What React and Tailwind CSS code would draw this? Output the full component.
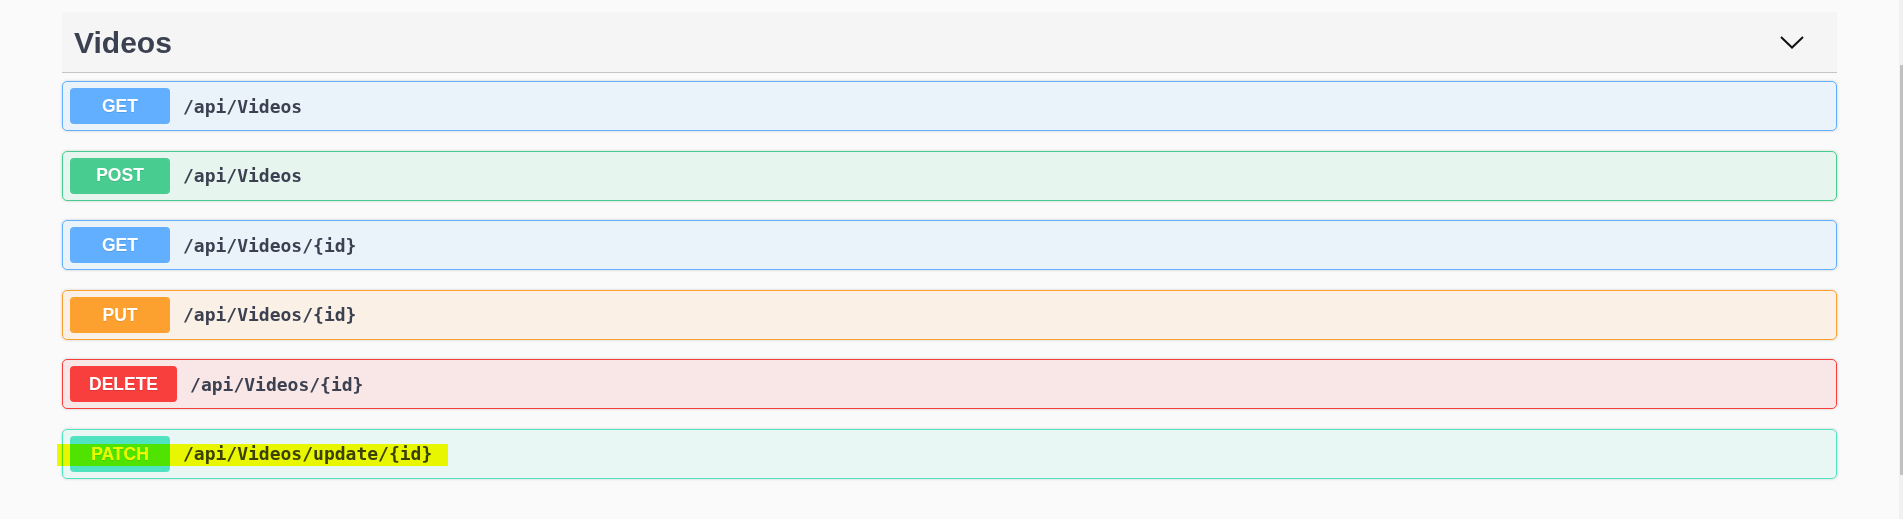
import React from 'react';

const ops = [
  { method: 'GET', path: '/api/Videos', box: 'border-[#61affe] bg-[#61affe]/10', badge: 'bg-[#61affe]' },
  { method: 'POST', path: '/api/Videos', box: 'border-[#49cc90] bg-[#49cc90]/10', badge: 'bg-[#49cc90]' },
  { method: 'GET', path: '/api/Videos/{id}', box: 'border-[#61affe] bg-[#61affe]/10', badge: 'bg-[#61affe]' },
  { method: 'PUT', path: '/api/Videos/{id}', box: 'border-[#fca130] bg-[#fca130]/10', badge: 'bg-[#fca130]' },
  { method: 'DELETE', path: '/api/Videos/{id}', box: 'border-[#f93e3e] bg-[#f93e3e]/10', badge: 'bg-[#f93e3e]' },
  { method: 'PATCH', path: '/api/Videos/update/{id}', box: 'border-[#50e3c2] bg-[#50e3c2]/10', badge: 'bg-[#50e3c2]' },
];

function OpRow({ op }) {
  return (
    <div
      className={`flex items-center h-[50px] border rounded-[5px] pl-[7px] pr-[6px] shadow-[0_0_3px_rgba(0,0,0,0.19)] ${op.box}`}
    >
      <span
        className={`min-w-[100px] h-[36px] px-[19px] flex items-center justify-center rounded-[4px] text-white font-bold text-[17.5px] [text-shadow:0_1px_0_rgba(0,0,0,0.1)] ${op.badge}`}
        style={{ fontFamily: '"Liberation Sans", Arial, sans-serif' }}
      >
        {op.method}
      </span>
      <span
        className="ml-[13px] text-[18px] font-bold text-[#3b4151]"
        style={{ fontFamily: '"DejaVu Sans Mono", monospace' }}
      >
        {op.path}
      </span>
    </div>
  );
}

export default function App() {
  return (
    <div className="flex h-[519px] bg-[#fafafa] overflow-hidden">
      <main className="relative flex-1 px-[62px] pt-[12px]">
        <section>
          <div className="flex items-center justify-between h-[61px] bg-[#f5f5f5] border-b border-[#c4c5c9] pl-[12px] pr-[33px]">
            <h3
              className="text-[30px] font-bold text-[#3b4151]"
              style={{ fontFamily: '"Liberation Sans", Arial, sans-serif' }}
            >
              Videos
            </h3>
            <svg width="24" height="14" viewBox="0 0 24 14" fill="none">
              <polyline points="1,2 12,12.5 23,2" stroke="#111" strokeWidth="2" />
            </svg>
          </div>
          <div className="flex flex-col gap-[19.6px] mt-[8px]">
            {ops.map((op, i) => (
              <OpRow key={i} op={op} />
            ))}
          </div>
        </section>
        {/* highlighter mark over the PATCH row */}
        <div className="absolute left-[57px] top-[444px] w-[391px] h-[22px] bg-[#eaf800] mix-blend-darken pointer-events-none" />
      </main>
      <div className="w-[4px] bg-[#f1f1f1]">
        <div className="ml-[1px] mt-[65px] w-[3px] h-[410px] bg-[#c1c1c1]" />
      </div>
    </div>
  );
}
